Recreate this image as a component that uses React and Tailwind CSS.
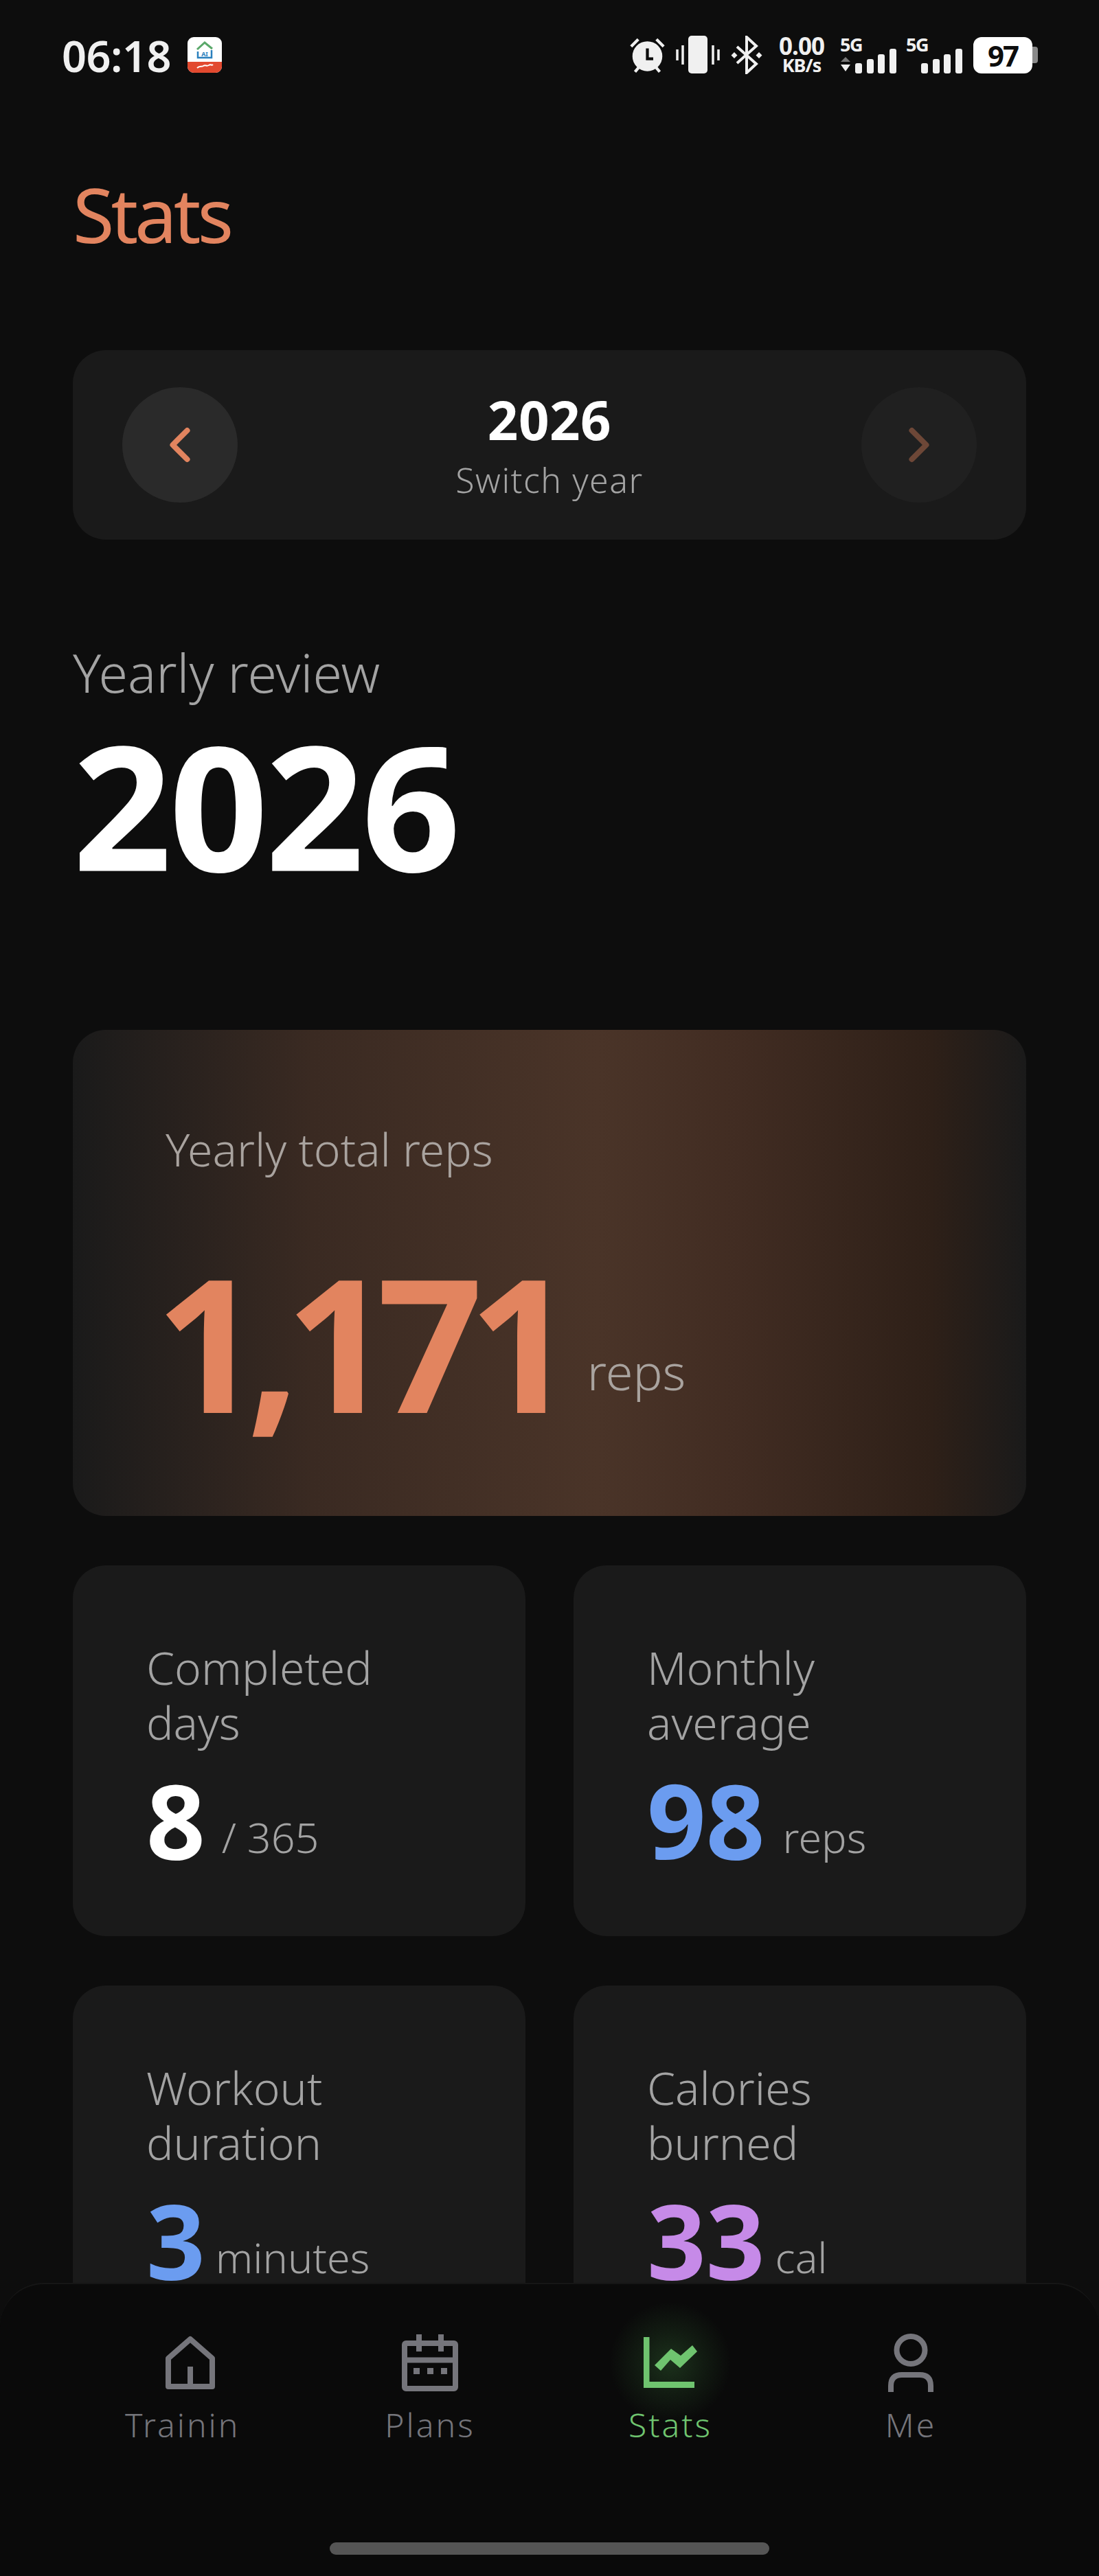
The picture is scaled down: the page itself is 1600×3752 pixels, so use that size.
import { ChevronLeft, ChevronRight } from "lucide-react";

const font = { fontFamily: '"Noto Sans", sans-serif' };

function AppBadge() {
  return (
    <svg width="50" height="52" viewBox="0 0 50 52" className="ml-[24px]">
      <rect width="50" height="52" rx="9" fill="#fff" />
      <path d="M0 36H50V43a9 9 0 0 1-9 9H9a9 9 0 0 1-9-9Z" fill="#e2492f" />
      <path d="M14 18 25 8 36 17" fill="none" stroke="#5aa86a" strokeWidth="3" />
      <path d="M15 21V30H35V19" fill="none" stroke="#2b80bd" strokeWidth="2.5" />
      <text x="25" y="28" textAnchor="middle" fontSize="9" fontWeight="700" fill="#2b80bd">AI</text>
      <path d="M14 45c4-4 6-1 9-3s5 1 8-1 4 1 6-1" fill="none" stroke="#fff" strokeWidth="2" />
    </svg>
  );
}

function Alarm() {
  return (
    <svg width="53" height="56" viewBox="0 0 56 56">
      <ellipse cx="28" cy="30" rx="23" ry="23" fill="#f0f0f0" />
      <path d="M28 18V34H37" fill="none" stroke="#0d0d0d" strokeWidth="4.5" />
      <path d="M3 15 14 4M53 15 42 4M9 54l6-7M47 54l-6-7" stroke="#f0f0f0" strokeWidth="4.5" />
    </svg>
  );
}

function Vibrate() {
  return (
    <svg width="64" height="56" viewBox="0 0 64 56">
      <rect x="18" y="0" width="28" height="55" rx="5" fill="#f0f0f0" />
      <path d="M2 20V36M10 14V42M54 14V42M62 20V36" stroke="#f0f0f0" strokeWidth="3.5" />
    </svg>
  );
}

function Bluetooth() {
  return (
    <svg width="46" height="56" viewBox="0 0 46 56">
      <path d="M9 16 37 41 23 54V2L37 15 9 40" fill="none" stroke="#f0f0f0" strokeWidth="4" />
      <path d="M5 24 9.500 28.500 5 33 .5 28.500ZM41 24l4.500 4.500L41 33l-4.500-4.500Z" fill="#f0f0f0" />
    </svg>
  );
}

function Signal({ arrows }) {
  return (
    <div className="relative h-[56px] w-[82px]">
      <div className="absolute left-0 top-[-5px] text-[27px] leading-[36px] font-bold tracking-[-1.5px] text-[#f0f0f0]">5G</div>
      <svg width="82" height="56" viewBox="0 0 82 56" className="absolute inset-0">
        {arrows ? <path d="M1 38 8 31 15 38Z" fill="#777" /> : null}
        {arrows ? <path d="M1 42H15L8 52Z" fill="#f0f0f0" /> : null}
        <rect x="22" y="40" width="10" height="15" rx="3" fill="#f0f0f0" />
        <rect x="39" y="34" width="10" height="21" rx="3" fill="#f0f0f0" />
        <rect x="55" y="27" width="10" height="28" rx="3" fill="#f0f0f0" />
        <rect x="72" y="19" width="10" height="36" rx="3" fill="#f0f0f0" />
      </svg>
    </div>
  );
}

function StatusBar() {
  return (
    <div className="flex h-[56px] items-center justify-between pl-[90px] pr-[89px]">
      <div className="flex items-center">
        <div className="text-[63px] leading-none font-semibold tracking-[-0.5px] text-[#f0f0f0]">06:18</div>
        <AppBadge />
      </div>
      <div className="flex items-center">
        <Alarm />
        <div className="ml-[15px]"><Vibrate /></div>
        <div className="ml-[16px]"><Bluetooth /></div>
        <div className="ml-[22px] flex w-[70px] flex-col items-center text-[#f0f0f0]">
          <div className="text-[35px] leading-[30px] font-bold tracking-[-1px]">0.00</div>
          <div className="text-[27px] leading-[26px] font-bold tracking-[-1px]">KB/s</div>
        </div>
        <div className="ml-[21px]"><Signal arrows /></div>
        <div className="ml-[14px]"><Signal /></div>
        <div className="ml-[16px] flex items-center">
          <div className="flex h-[53px] w-[86px] items-center justify-center rounded-[12px] bg-white text-[42px] font-bold tracking-[-2px] text-[#0d0d0d]">97</div>
          <div className="h-[24px] w-[8px] rounded-r-[4px] bg-[#8a8a8a]" />
        </div>
      </div>
    </div>
  );
}

function StatCard({ label, value, unit, color, gap }) {
  return (
    <div className="h-[540px] rounded-[48px] bg-[#1a1a1a] pl-[107px] pt-[108px]">
      <div className="whitespace-pre-line text-[66px] leading-[80px] font-light text-[#a3a3a3]">{label}</div>
      <div className="mt-[27px] flex items-baseline">
        <span className={`text-[150px] leading-[150px] font-bold ${color}`}>{value}</span>
        <span className={`-translate-y-[9px] text-[61px] font-light text-[#a3a3a3] ${gap}`}>{unit}</span>
      </div>
    </div>
  );
}

function HomeIcon() {
  return (
    <svg width="72" height="78" viewBox="0 0 72 78">
      <path d="M36 5 68 33V74H4V33Z" fill="none" stroke="#75757b" strokeWidth="8" strokeLinejoin="round" />
      <path d="M36 45V74" stroke="#75757b" strokeWidth="8" />
    </svg>
  );
}

function CalendarIcon() {
  return (
    <svg width="82" height="83" viewBox="0 0 82 83">
      <rect x="4" y="13" width="74" height="66" rx="2" fill="none" stroke="#75757b" strokeWidth="8" />
      <path d="M4 37.500H78M25 0V25M57 0V25" stroke="#75757b" strokeWidth="8" />
      <path d="M17 49H26V58H17ZM37 49H46V58H37ZM57 49H66V58H57Z" fill="#75757b" />
    </svg>
  );
}

function ChartIcon() {
  return (
    <svg width="78" height="74" viewBox="0 0 78 74">
      <path d="M4 0V69.500H74" fill="none" stroke="#6fc46f" strokeWidth="9" />
      <path d="M16 41 40 17 54 27 71 12 78 21 53 45 39 33 25 49Z" fill="#6fc46f" />
    </svg>
  );
}

function PersonIcon() {
  return (
    <svg width="66" height="85" viewBox="0 0 66 85">
      <ellipse cx="33" cy="24" rx="20.500" ry="20" fill="none" stroke="#75757b" strokeWidth="8" />
      <path d="M4 85V76Q4 60 20 60H46Q62 60 62 76V85" fill="none" stroke="#75757b" strokeWidth="8" />
    </svg>
  );
}

function NavItem({ label, icon, active, x, labelClass }) {
  return (
    <div className={`absolute top-[66px] flex w-[240px] flex-col items-center ${x}`}>
      <div className="relative flex h-[96px] items-center justify-center">
        {active ? <div className="absolute left-1/2 top-1/2 h-[260px] w-[260px] -translate-x-1/2 -translate-y-1/2 bg-[radial-gradient(circle,rgba(90,190,90,0.22)_0%,rgba(90,190,90,0.1)_24%,rgba(90,190,90,0)_48%)]" /> : null}
        <div className="relative">{icon}</div>
      </div>
      <div className={`relative mt-[13px] text-[48px] leading-[60px] font-light tracking-[3px] ${active ? "text-[#6fc46f]" : "text-[#75757b]"} ${labelClass}`}>{label}</div>
    </div>
  );
}

function BottomNav() {
  return (
    <div className="absolute bottom-0 left-0 h-[427px] w-full rounded-t-[64px] border-t-2 border-[#161616] bg-[#0a0a0a]">
      <NavItem label="Trainin" icon={<HomeIcon />} x="left-[157px]" labelClass="w-[190px] text-left" />
      <NavItem label="Plans" icon={<CalendarIcon />} x="left-[506px]" labelClass="" />
      <NavItem label="Stats" icon={<ChartIcon />} x="left-[856px]" labelClass="" active />
      <NavItem label="Me" icon={<PersonIcon />} x="left-[1206px]" labelClass="" />
      <div className="mx-auto mt-[376px] h-[18px] w-[640px] rounded-full bg-[#555555]" />
    </div>
  );
}

export default function App() {
  return (
    <div style={font} className="relative h-[3752px] w-[1600px] overflow-hidden bg-[#0d0d0d] pt-[52px]">
      <StatusBar />

      <div className="px-[106px]">
        <div className="mt-[143px] text-[110px] leading-[120px] tracking-[-5px] text-[#e2845f]">Stats</div>

        <div className="mt-[139px] flex h-[276px] items-center justify-between rounded-[48px] bg-[#1a1a1a] px-[72px]">
          <div className="flex h-[168px] w-[168px] items-center justify-center rounded-full bg-[#2a2a2a]">
            <ChevronLeft size={84} strokeWidth={2.3} color="#e2845f" />
          </div>
          <div className="flex flex-col items-center">
            <div className="text-[78px] leading-[92px] font-bold tracking-[0.5px] text-white">2026</div>
            <div className="mt-[9px] text-[50px] leading-[66px] font-light tracking-[1.5px] text-[#a3a3a3]">Switch year</div>
          </div>
          <div className="flex h-[168px] w-[168px] items-center justify-center rounded-full bg-[#202020]">
            <ChevronRight size={84} strokeWidth={2.3} color="#6d4737" />
          </div>
        </div>

        <div className="mt-[146px] text-[77px] leading-[96px] font-light text-[#a3a3a3]">Yearly review</div>
        <div className="mt-[4px] text-[252px] leading-[280px] font-bold tracking-[-4px] text-white">2026</div>

        <div className="mt-[188px] h-[708px] rounded-[48px] bg-[linear-gradient(90deg,#1a1a1a_0%,#3a2a22_25%,#4a3428_55%,#412c22_70%,#2e2018_90%,#1a1a1a_100%)] pl-[135px] pt-[128px]">
          <div className="text-[66px] leading-[90px] font-light text-[#a9a39f]">Yearly total reps</div>
          <div className="mt-[85px] flex items-baseline">
            <span className="-ml-[15px] text-[270px] leading-[300px] font-bold tracking-[-21px] text-[#e2845f]">1,171</span>
            <span className="ml-[39px] -translate-y-[33px] text-[72px] font-light text-[#a9a39f]">reps</span>
          </div>
        </div>

        <div className="mt-[72px] grid grid-cols-2 gap-x-[70px] gap-y-[72px]">
          <StatCard label={"Completed\ndays"} value="8" unit="/ 365" color="text-white" gap="ml-[24px]" />
          <StatCard label={"Monthly\naverage"} value="98" unit="reps" color="text-[#6b9cf0]" gap="ml-[26px]" />
          <StatCard label={"Workout\nduration"} value="3" unit="minutes" color="text-[#6b9cf0]" gap="ml-[15px]" />
          <StatCard label={"Calories\nburned"} value="33" unit="cal" color="text-[#c68ae8]" gap="ml-[15px]" />
        </div>
      </div>

      <BottomNav />
    </div>
  );
}
